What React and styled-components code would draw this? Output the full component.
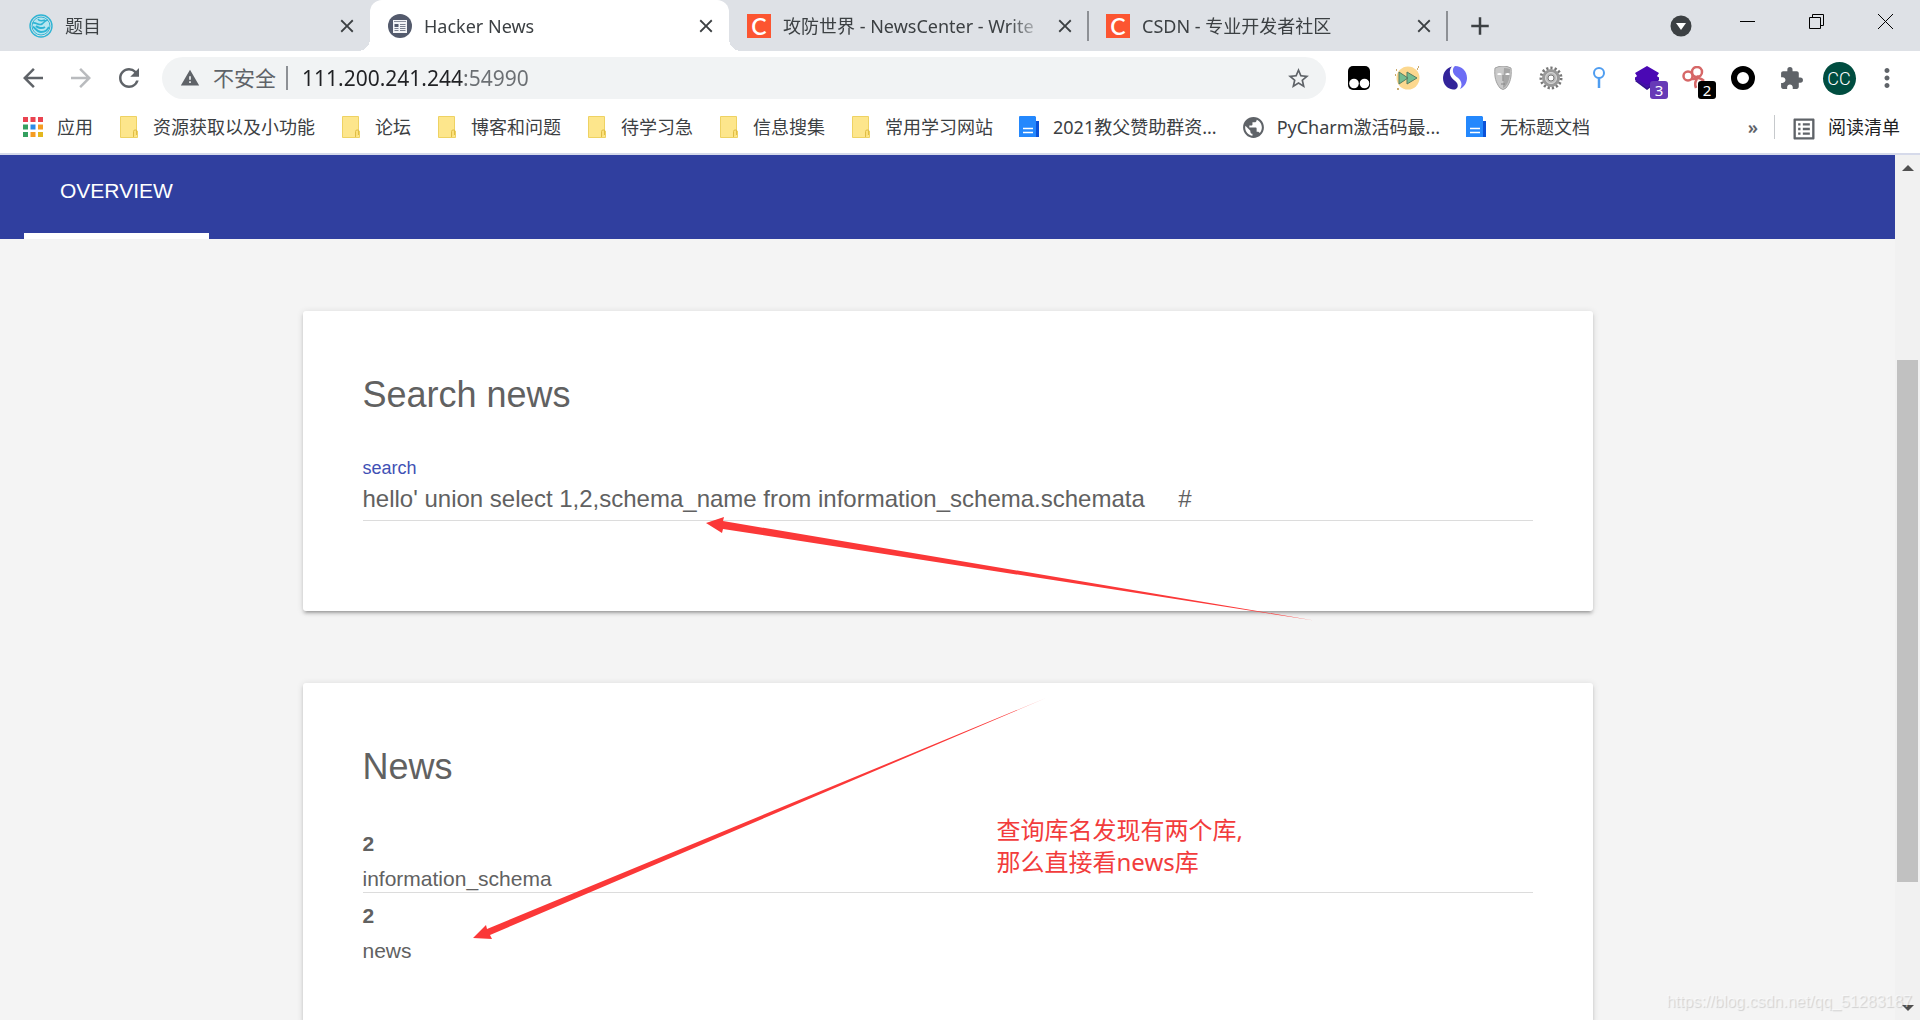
import React from 'react'
import styled, { createGlobalStyle, css } from 'styled-components'
import {
    MdAdd,
    MdArrowBack,
    MdArrowForward,
    MdClose,
    MdExtension,
    MdListAlt,
    MdMoreVert,
    MdPublic,
    MdRefresh,
    MdStarBorder,
    MdWarning,
} from 'react-icons/md'

const uiFont = '"Noto Sans", "Noto Sans CJK SC", sans-serif'
const pageFont = '"Liberation Sans", Arial, sans-serif'

const GlobalStyle = createGlobalStyle`
    * {
        box-sizing: border-box;
    }

    body {
        margin: 0;
        overflow: hidden;
    }

    button {
        padding: 0;
        border: 0;
        background: none;
        font: inherit;
        color: inherit;
    }

    svg {
        display: block;
        flex: none;
    }
`

const Window = styled.div`
    display: flex;
    flex-direction: column;
    height: 100vh;
    overflow: hidden;
    font-family: ${uiFont};
    font-size: 18px;
    color: #3c4043;
    background: #fff;
`

/* ---------- tab strip ---------- */

const TabStrip = styled.header`
    display: flex;
    flex: none;
    height: 51px;
    padding-left: 11px;
    background: #dee1e6;
`

const activeTab = css`
    background: #fff;
    border-radius: 12px 12px 0 0;

    &::before,
    &::after {
        content: '';
        position: absolute;
        bottom: 0;
        width: 12px;
        height: 12px;
    }

    &::before {
        left: -12px;
        background: radial-gradient(circle at 0 0, transparent 12px, #fff 12px);
    }

    &::after {
        right: -12px;
        background: radial-gradient(circle at 100% 0, transparent 12px, #fff 12px);
    }
`

const Tab = styled.div`
    position: relative;
    display: flex;
    align-items: center;
    gap: 12px;
    flex: 0 1 359px;
    min-width: 0;
    height: 51px;
    padding: 0 11px 0 18px;
    ${props => props.$active && activeTab}
`

const TabTitle = styled.span`
    flex: 1;
    min-width: 0;
    overflow: hidden;
    white-space: nowrap;
    line-height: 28px;
    mask-image: linear-gradient(90deg, #000 calc(100% - 36px), transparent);
`

const TabClose = styled.button`
    display: grid;
    place-items: center;
    width: 24px;
    height: 24px;
    margin-left: -4px;
`

const TabDivider = styled.span`
    align-self: center;
    width: 2px;
    height: 30px;
    margin: 0 -1px;
    background: #8d9095;
`

const NewTab = styled.button`
    display: grid;
    place-items: center;
    width: 42px;
    margin-left: 12px;
`

const CsdnIcon = styled.span`
    display: grid;
    place-items: center;
    flex: none;
    width: 24px;
    height: 24px;
    background: #fc5531;
    color: #fff;
    font: 600 23px/24px Lato, sans-serif;
`

const WindowControls = styled.div`
    display: flex;
    margin-left: auto;
`

const TabSearch = styled.button`
    display: grid;
    place-items: center;
    width: 64px;
    height: 51px;
`

const CaptionButton = styled.button`
    display: grid;
    place-items: center;
    width: 69px;
    height: 43px;
    color: #000;
`

/* ---------- toolbar ---------- */

const Toolbar = styled.div`
    display: flex;
    flex: none;
    align-items: center;
    gap: 9px;
    padding: 6px 9px 3px;
`

const ToolGroup = styled.div`
    display: flex;
`

const ToolButton = styled.button`
    position: relative;
    display: grid;
    place-items: center;
    width: 48px;
    height: 42px;
    color: ${props => (props.$dim ? '#b9bbbe' : '#5f6368')};
`

const Omnibox = styled.div`
    display: flex;
    align-items: center;
    flex: 1;
    min-width: 0;
    height: 42px;
    padding: 0 15px 0 18px;
    border-radius: 21px;
    background: #f1f3f4;
    font-size: 21px;
    color: #5f6368;
`

const Security = styled.button`
    display: flex;
    align-items: center;
    gap: 13px;
    padding-right: 10px;
    line-height: 30px;
    white-space: nowrap;
`

const OmniDivider = styled.span`
    width: 2px;
    height: 24px;
    margin-right: 14px;
    background: #8d9095;
`

/* host is dark, port is grey */
const Address = styled.input`
    flex: 1;
    min-width: 0;
    height: 32px;
    padding: 0;
    border: 0;
    outline: 0;
    font: inherit;
    color: #202124;
    background: linear-gradient(90deg, #202124 162px, #6b6f73 162px);
    background-clip: text;
    -webkit-text-fill-color: transparent;
`

const StarButton = styled.button`
    display: grid;
    place-items: center;
    width: 26px;
    height: 26px;
`

const Badge = styled.span`
    position: absolute;
    right: 3px;
    bottom: 0;
    width: 18px;
    height: 18px;
    border-radius: 3px;
    background: ${props => props.$color};
    color: #fff;
    font-size: 15px;
    line-height: 18px;
    text-align: center;
`

const Avatar = styled.span`
    display: grid;
    place-items: center;
    width: 33px;
    height: 33px;
    border-radius: 50%;
    background: #004d40;
    color: #fff;
    font: 300 18px/33px Roboto, sans-serif;
`

/* ---------- bookmarks ---------- */

const BookmarkBar = styled.nav`
    display: flex;
    flex: none;
    align-items: center;
    height: 53px;
    padding: 0 8px 2px 9px;
    border-bottom: 2px solid #d6daea;
`

const Bookmark = styled.a`
    display: flex;
    align-items: center;
    gap: 12px;
    padding: 0 12px;
    color: inherit;
    line-height: 28px;
    white-space: nowrap;
    text-decoration: none;
`

const BookmarkIcon = styled.span`
    display: grid;
    place-items: center;
    width: 24px;
    height: 24px;
    color: #5f6368;
`

const BookmarkEnd = styled.div`
    display: flex;
    align-items: center;
    margin-left: auto;
`

const MoreBookmarks = styled.button`
    width: 42px;
    height: 30px;
    font-size: 18px;
    font-weight: 600;
    line-height: 24px;
    color: #5f6368;
`

const BarDivider = styled.span`
    width: 1px;
    height: 24px;
    margin-right: 3px;
    background: #c6c9cc;
`

const ReadingList = styled.button`
    display: flex;
    align-items: center;
    gap: 14px;
    padding: 0 12px;
    line-height: 28px;
    color: #202124;
`

/* ---------- page ---------- */

const Viewport = styled.div`
    position: relative;
    display: flex;
    flex: 1;
    min-height: 0;
`

const Page = styled.main`
    flex: 1;
    min-width: 0;
    overflow: hidden;
    background: #f4f4f4;
    font-family: ${pageFont};
    color: #616161;
`

const PageNav = styled.nav`
    display: flex;
    height: 84px;
    padding: 0 24px;
    background: #303f9f;
`

const NavLink = styled.a`
    padding: 0 36px;
    border-bottom: 6px solid #fff;
    color: #fff;
    font-size: 21px;
    line-height: 72px;
    text-decoration: none;
`

const Cards = styled.div`
    display: flex;
    flex-direction: column;
    align-items: center;
    gap: 72px;
    padding: 72px 24px;
`

const Card = styled.section`
    position: relative;
    width: 100%;
    max-width: 1290px;
    padding: 60px;
    border-radius: 3px;
    background: #fff;
    box-shadow: 0 3px 3px rgba(0, 0, 0, 0.14), 0 4px 2px -3px rgba(0, 0, 0, 0.2), 0 1px 7px rgba(0, 0, 0, 0.12);
`

const CardTitle = styled.h4`
    margin: 0 0 30px;
    font-size: 36px;
    font-weight: 400;
    line-height: 48px;
`

const SearchForm = styled.form`
    display: flex;
    flex-direction: column;
    padding: 6px 0 30px;
`

const SearchLabel = styled.label`
    color: #3f51b5;
    font-size: 18px;
    line-height: 26px;
`

const SearchInput = styled.input`
    width: 100%;
    height: 40px;
    padding: 0 0 3px;
    border: 0;
    border-bottom: 1px solid #dcdcdc;
    outline: 0;
    background: none;
    color: #616161;
    font-family: inherit;
    font-size: 24px;
`

const NewsItem = styled.article`
    padding: 6px 0 1px;
    font-size: 21px;

    & + & {
        border-top: 1px solid #dcdcdc;
    }
`

const NewsTitle = styled.h5`
    margin: 0 0 5px;
    font-size: 21px;
    font-weight: 700;
    line-height: 34px;
`

const NewsText = styled.p`
    margin: 0;
    line-height: 25px;
`

/* ---------- notes drawn over the page ---------- */

const Arrow = styled.svg`
    position: absolute;
    z-index: 1;
    fill: #fb3838;
    pointer-events: none;
`

const QueryArrow = styled(Arrow)`
    top: 206px;
    left: 403px;
`

const ResultArrow = styled(Arrow)`
    top: 15px;
    left: 170px;
`

const Note = styled.p`
    position: absolute;
    top: 131px;
    left: 694px;
    margin: 0;
    color: #f23c3c;
    font-family: ${uiFont};
    font-size: 24px;
    line-height: 32px;
`

const Watermark = styled.span`
    position: absolute;
    right: 8px;
    bottom: 8px;
    color: rgba(255, 255, 255, 0.5);
    font-family: ${pageFont};
    font-size: 16px;
    line-height: 20px;
    text-shadow: 1px 1px 1px rgba(0, 0, 0, 0.15);
`

/* ---------- scrollbar ---------- */

const Scrollbar = styled.div`
    display: flex;
    flex-direction: column;
    flex: none;
    width: 25px;
    background: #f1f1f1;
`

const ScrollButton = styled.button`
    display: grid;
    place-items: center;
    width: 25px;
    height: 25px;
    color: #505050;
`

const ScrollTrack = styled.div`
    display: grid;
    flex: 1;
    grid-template-rows: 180fr 522fr 113fr;
    padding: 0 2px;
`

const ScrollThumb = styled.div`
    grid-row: 2;
    background: #c1c1c1;
`

/* ---------- drawings ---------- */

const ChallengeIcon = () => (
    <svg width="24" height="24" viewBox="0 0 24 24" fill="none" stroke="#2fb4d4">
        <circle cx="12" cy="12" r="11" strokeWidth="1.4" />
        <circle cx="12" cy="12" r="9" fill="#b6e6f0" strokeWidth="1" />
        <path d="M4 9c3-1 6 3 9 1s3-4 6-4M9 5c1 2 4 2 7 1" strokeWidth="1.6" />
        <path d="M4 13c2 0 3 5 8 5s6-2 8-5M7 12c2 2 6 3 9 1" strokeWidth="2" />
    </svg>
)

const NewsIcon = () => (
    <svg width="24" height="24" viewBox="0 0 24 24">
        <circle cx="12" cy="12" r="12" fill="#535a6c" />
        <path d="M5 6h14v13H5z" fill="#f3f4f6" />
        <path d="M6 7h12v1H6z" fill="#8b909d" />
        <path d="M6.500 10h4v3h-4z" fill="#535a6c" />
        <path d="M12 10.500h5.500M12 12.500h5.500M6.500 14.500h4M6.500 16.500h4M12 14.500h5.500M12 16.500h5.500" stroke="#7b8190" />
    </svg>
)

const AppsIcon = () => (
    <svg width="20" height="20" viewBox="0 0 20 20">
        <path d="M0 0h5v5H0zM7.500 0h5v5h-5zM15 0h5v5h-5z" fill="#ea4350" />
        <path d="M0 7.500h5v5H0zM0 15h5v5H0z" fill="#34a060" />
        <path d="M7.500 7.500h5v5h-5z" fill="#2a8be8" />
        <path d="M15 7.500h5v5h-5zM7.500 15h5v5h-5z" fill="#f59c22" />
        <path d="M15 15h5v5h-5z" fill="#e3b71e" />
    </svg>
)

const FolderIcon = () => (
    <svg width="18" height="22" viewBox="0 0 18 22">
        <path d="M.5.5h16V15h1v6.500H.5z" fill="#fde68c" stroke="#eed263" />
        <path d="M13.500 21v-5.500q0-1.500 1.500-1.500h1.500v5" fill="#fbe07a" stroke="#dfbd46" />
    </svg>
)

const DocIcon = () => (
    <svg width="20" height="22" viewBox="0 0 20 22">
        <path d="M16 5h4v16h-4z" fill="#0b52d8" />
        <path d="M0 1q0-1 1-1h15l1 1v20H0z" fill="#2488fd" />
        <path d="M4 12.500h10M4 16.500h10" stroke="#fff" strokeWidth="1.600" />
    </svg>
)

const MonkeyIcon = () => (
    <svg width="24" height="24" viewBox="0 0 24 24">
        <rect x="1" y="0" width="22" height="24" rx="5" />
        <circle cx="7" cy="17.500" r="4.800" fill="#fff" />
        <circle cx="17.500" cy="17.500" r="4.800" fill="#fff" />
    </svg>
)

const ForwardIcon = () => (
    <svg width="26" height="26" viewBox="0 0 26 26">
        <circle cx="14" cy="13" r="11.500" fill="#fcd88f" />
        <path d="M5 7l9 6-9 6zM13 7l10 6-10 6z" fill="#75bd91" stroke="#587d62" />
        <path d="M2 5h1M1 10h1M3 24h2M24 2h1M23 4h1" stroke="#b9903f" strokeWidth="1.500" />
    </svg>
)

const SwirlIcon = () => (
    <svg width="24" height="24" viewBox="0 0 24 24">
        <path d="M9 .5C3 2 0 7 0 12c0 6 4 11 10 11.500 4 .5 6-3 4-6.500-2-3-6-4-7-9-.5-3 0-5.500 2-7.500z" fill="#33249a" />
        <path d="M12 0c7 0 12 5 12 12 0 5-3 9-7 11 2-3 2-6 0-9s-6-4-7-8c-.5-3 .5-5 2-6z" fill="#6d6df5" />
    </svg>
)

const MaskIcon = () => (
    <svg width="18" height="24" viewBox="0 0 18 24">
        <path d="M1 2q8-4 16 0c1 9-1 15-5 20q-3 3-6 0C2 17 0 11 1 2z" fill="#c9c9c9" stroke="#a2a2a2" />
        <path d="M10 2q3 0 6 1c0 8-1 13-5 18l-2 1z" fill="#a6a6a6" />
        <path d="M3 8q2-2 5 0l-1 1H4zM11 8q3-2 5 0l-1 1h-3z" fill="#fff" />
        <path d="M9 9v6M7 18h4" stroke="#858585" />
    </svg>
)

const GearIcon = () => (
    <svg width="24" height="24" viewBox="0 0 24 24" fill="none">
        <circle cx="12" cy="12" r="10" stroke="#777" strokeWidth="3" strokeDasharray="2.200 2" />
        <circle cx="12" cy="12" r="7.500" fill="#b8b8b8" stroke="#999" strokeWidth="3" />
        <circle cx="12" cy="12" r="5.500" stroke="#d8d8d8" />
        <circle cx="12" cy="12" r="3" fill="#fff" stroke="#777" />
    </svg>
)

const PinIcon = () => (
    <svg width="14" height="24" viewBox="0 0 14 24" fill="none" stroke="#4f9df0" strokeWidth="2">
        <circle cx="7" cy="7" r="5" />
        <path d="M7 12v10" strokeWidth="2.500" />
    </svg>
)

const LayersIcon = () => (
    <svg width="24" height="24" viewBox="0 0 24 24">
        <path d="M0 15l5-3 7 5 7-5 5 3-12 9z" fill="#32108b" />
        <path d="M0 11l12 8 12-8v3l-12 8-12-8z" fill="#4310a8" />
        <path d="M12 0l12 7-2 3 2 2-12 7-12-7 2-2-2-3z" fill="#4a08b4" />
    </svg>
)

const KnotIcon = () => (
    <svg width="26" height="24" viewBox="0 0 26 24" fill="none" stroke="#d66767" strokeWidth="2.500">
        <circle cx="6" cy="10" r="4.500" />
        <circle cx="15" cy="6" r="5" />
        <path d="M9 13q5 0 8-3M12 12q6-1 10 3M15 13q-3 4-1 9" />
    </svg>
)

const RingIcon = () => (
    <svg width="24" height="24" viewBox="0 0 24 24">
        <circle cx="12" cy="12" r="9" fill="none" stroke="#000" strokeWidth="6" />
    </svg>
)

const tabs = [
    { title: '题目', icon: <ChallengeIcon /> },
    { title: 'Hacker News', icon: <NewsIcon />, active: true },
    { title: '攻防世界 - NewsCenter - Write', icon: <CsdnIcon>C</CsdnIcon>, divider: true },
    { title: 'CSDN - 专业开发者社区', icon: <CsdnIcon>C</CsdnIcon>, divider: true },
]

const extensions = [
    { name: 'Scripts', icon: <MonkeyIcon /> },
    { name: 'Speed', icon: <ForwardIcon /> },
    { name: 'Swirl', icon: <SwirlIcon /> },
    { name: 'Mask', icon: <MaskIcon /> },
    { name: 'Gear', icon: <GearIcon /> },
    { name: 'Pin', icon: <PinIcon /> },
    { name: 'Layers', icon: <LayersIcon />, count: 3, color: '#673ab7' },
    { name: 'Knot', icon: <KnotIcon />, count: 2, color: '#000' },
    { name: 'Ring', icon: <RingIcon /> },
    { name: 'Extensions', icon: <MdExtension size={25} /> },
]

const bookmarks = [
    { label: '应用', icon: <AppsIcon /> },
    { label: '资源获取以及小功能', icon: <FolderIcon /> },
    { label: '论坛', icon: <FolderIcon /> },
    { label: '博客和问题', icon: <FolderIcon /> },
    { label: '待学习急', icon: <FolderIcon /> },
    { label: '信息搜集', icon: <FolderIcon /> },
    { label: '常用学习网站', icon: <FolderIcon /> },
    { label: '2021教父赞助群资...', icon: <DocIcon /> },
    { label: 'PyCharm激活码最...', icon: <MdPublic size={25} /> },
    { label: '无标题文档', icon: <DocIcon /> },
]

const news = [
    { title: '2', text: 'information_schema' },
    { title: '2', text: 'news' },
]

const Tabs = () => (
    <TabStrip>
        {tabs.map(tab => (
            <React.Fragment key={tab.title}>
                <Tab $active={tab.active}>
                    {tab.icon}
                    <TabTitle>{tab.title}</TabTitle>
                    <TabClose aria-label="Close tab"><MdClose size={22} /></TabClose>
                </Tab>
                {tab.divider && <TabDivider />}
            </React.Fragment>
        ))}
        <NewTab aria-label="New tab"><MdAdd size={30} /></NewTab>
        <WindowControls>
            <TabSearch aria-label="Search tabs">
                <svg width="22" height="22" viewBox="0 0 22 22">
                    <circle cx="11" cy="11" r="10.500" fill="#3c4043" />
                    <path d="M6 8h10l-5 7z" fill="#fff" />
                </svg>
            </TabSearch>
            <CaptionButton aria-label="Minimize">
                <svg width="15" height="15" viewBox="0 0 15 15"><path d="M0 7.500h15" stroke="currentColor" /></svg>
            </CaptionButton>
            <CaptionButton aria-label="Restore">
                <svg width="15" height="15" viewBox="0 0 15 15" fill="none" stroke="currentColor">
                    <path d="M.5 3.500h11v11H.5zM3.500 3.500v-3h11v11h-3" />
                </svg>
            </CaptionButton>
            <CaptionButton aria-label="Close">
                <svg width="15" height="15" viewBox="0 0 15 15"><path d="M0 0l15 15M15 0L0 15" stroke="currentColor" /></svg>
            </CaptionButton>
        </WindowControls>
    </TabStrip>
)

const AddressBar = () => (
    <Toolbar>
        <ToolGroup>
            <ToolButton aria-label="Back"><MdArrowBack size={30} /></ToolButton>
            <ToolButton aria-label="Forward" $dim><MdArrowForward size={30} /></ToolButton>
            <ToolButton aria-label="Reload"><MdRefresh size={30} /></ToolButton>
        </ToolGroup>
        <Omnibox>
            <Security><MdWarning size={20} />不安全</Security>
            <OmniDivider />
            <Address aria-label="Address" defaultValue="111.200.241.244:54990" />
            <StarButton aria-label="Bookmark this page"><MdStarBorder size={25} /></StarButton>
        </Omnibox>
        <ToolGroup>
            {extensions.map(ext => (
                <ToolButton key={ext.name} aria-label={ext.name}>
                    {ext.icon}
                    {ext.count && <Badge $color={ext.color}>{ext.count}</Badge>}
                </ToolButton>
            ))}
            <ToolButton aria-label="Profile"><Avatar>CC</Avatar></ToolButton>
            <ToolButton aria-label="Menu"><MdMoreVert size={30} /></ToolButton>
        </ToolGroup>
    </Toolbar>
)

const Bookmarks = () => (
    <BookmarkBar>
        {bookmarks.map(item => (
            <Bookmark href="#" key={item.label}>
                <BookmarkIcon>{item.icon}</BookmarkIcon>
                {item.label}
            </Bookmark>
        ))}
        <BookmarkEnd>
            <MoreBookmarks>»</MoreBookmarks>
            <BarDivider />
            <ReadingList>
                <BookmarkIcon><MdListAlt size={28} /></BookmarkIcon>
                阅读清单
            </ReadingList>
        </BookmarkEnd>
    </BookmarkBar>
)

const App = () => {
    return (
        <Window>
            <GlobalStyle />
            <Tabs />
            <AddressBar />
            <Bookmarks />
            <Viewport>
                <Page>
                    <PageNav>
                        <NavLink href="#overview">OVERVIEW</NavLink>
                    </PageNav>
                    <Cards>
                        <Card>
                            <CardTitle>Search news</CardTitle>
                            <SearchForm>
                                <SearchLabel htmlFor="search">search</SearchLabel>
                                <SearchInput
                                    id="search"
                                    type="text"
                                    defaultValue="hello' union select 1,2,schema_name from information_schema.schemata     #"
                                />
                            </SearchForm>
                            <QueryArrow width="608" height="104" viewBox="0 0 608 104">
                                <path d="M0 6L18 0l-1 4 591 99.500L17 12l-1 4z" />
                            </QueryArrow>
                        </Card>
                        <Card>
                            <CardTitle>News</CardTitle>
                            {news.map(item => (
                                <NewsItem key={item.text}>
                                    <NewsTitle>{item.title}</NewsTitle>
                                    <NewsText>{item.text}</NewsText>
                                </NewsItem>
                            ))}
                            <ResultArrow width="573" height="242" viewBox="0 0 573 242">
                                <path d="M0 240l13-13 1 4L573 0 17 237l2 4z" />
                            </ResultArrow>
                            <Note>查询库名发现有两个库,<br />那么直接看news库</Note>
                        </Card>
                    </Cards>
                </Page>
                <Scrollbar>
                    <ScrollButton aria-label="Scroll up">
                        <svg width="12" height="6" viewBox="0 0 12 6"><path d="M0 6l6-6 6 6z" fill="currentColor" /></svg>
                    </ScrollButton>
                    <ScrollTrack><ScrollThumb /></ScrollTrack>
                    <ScrollButton aria-label="Scroll down">
                        <svg width="12" height="6" viewBox="0 0 12 6"><path d="M0 0l6 6 6-6z" fill="currentColor" /></svg>
                    </ScrollButton>
                </Scrollbar>
                <Watermark>https://blog.csdn.net/qq_51283187</Watermark>
            </Viewport>
        </Window>
    )
}

export default App
